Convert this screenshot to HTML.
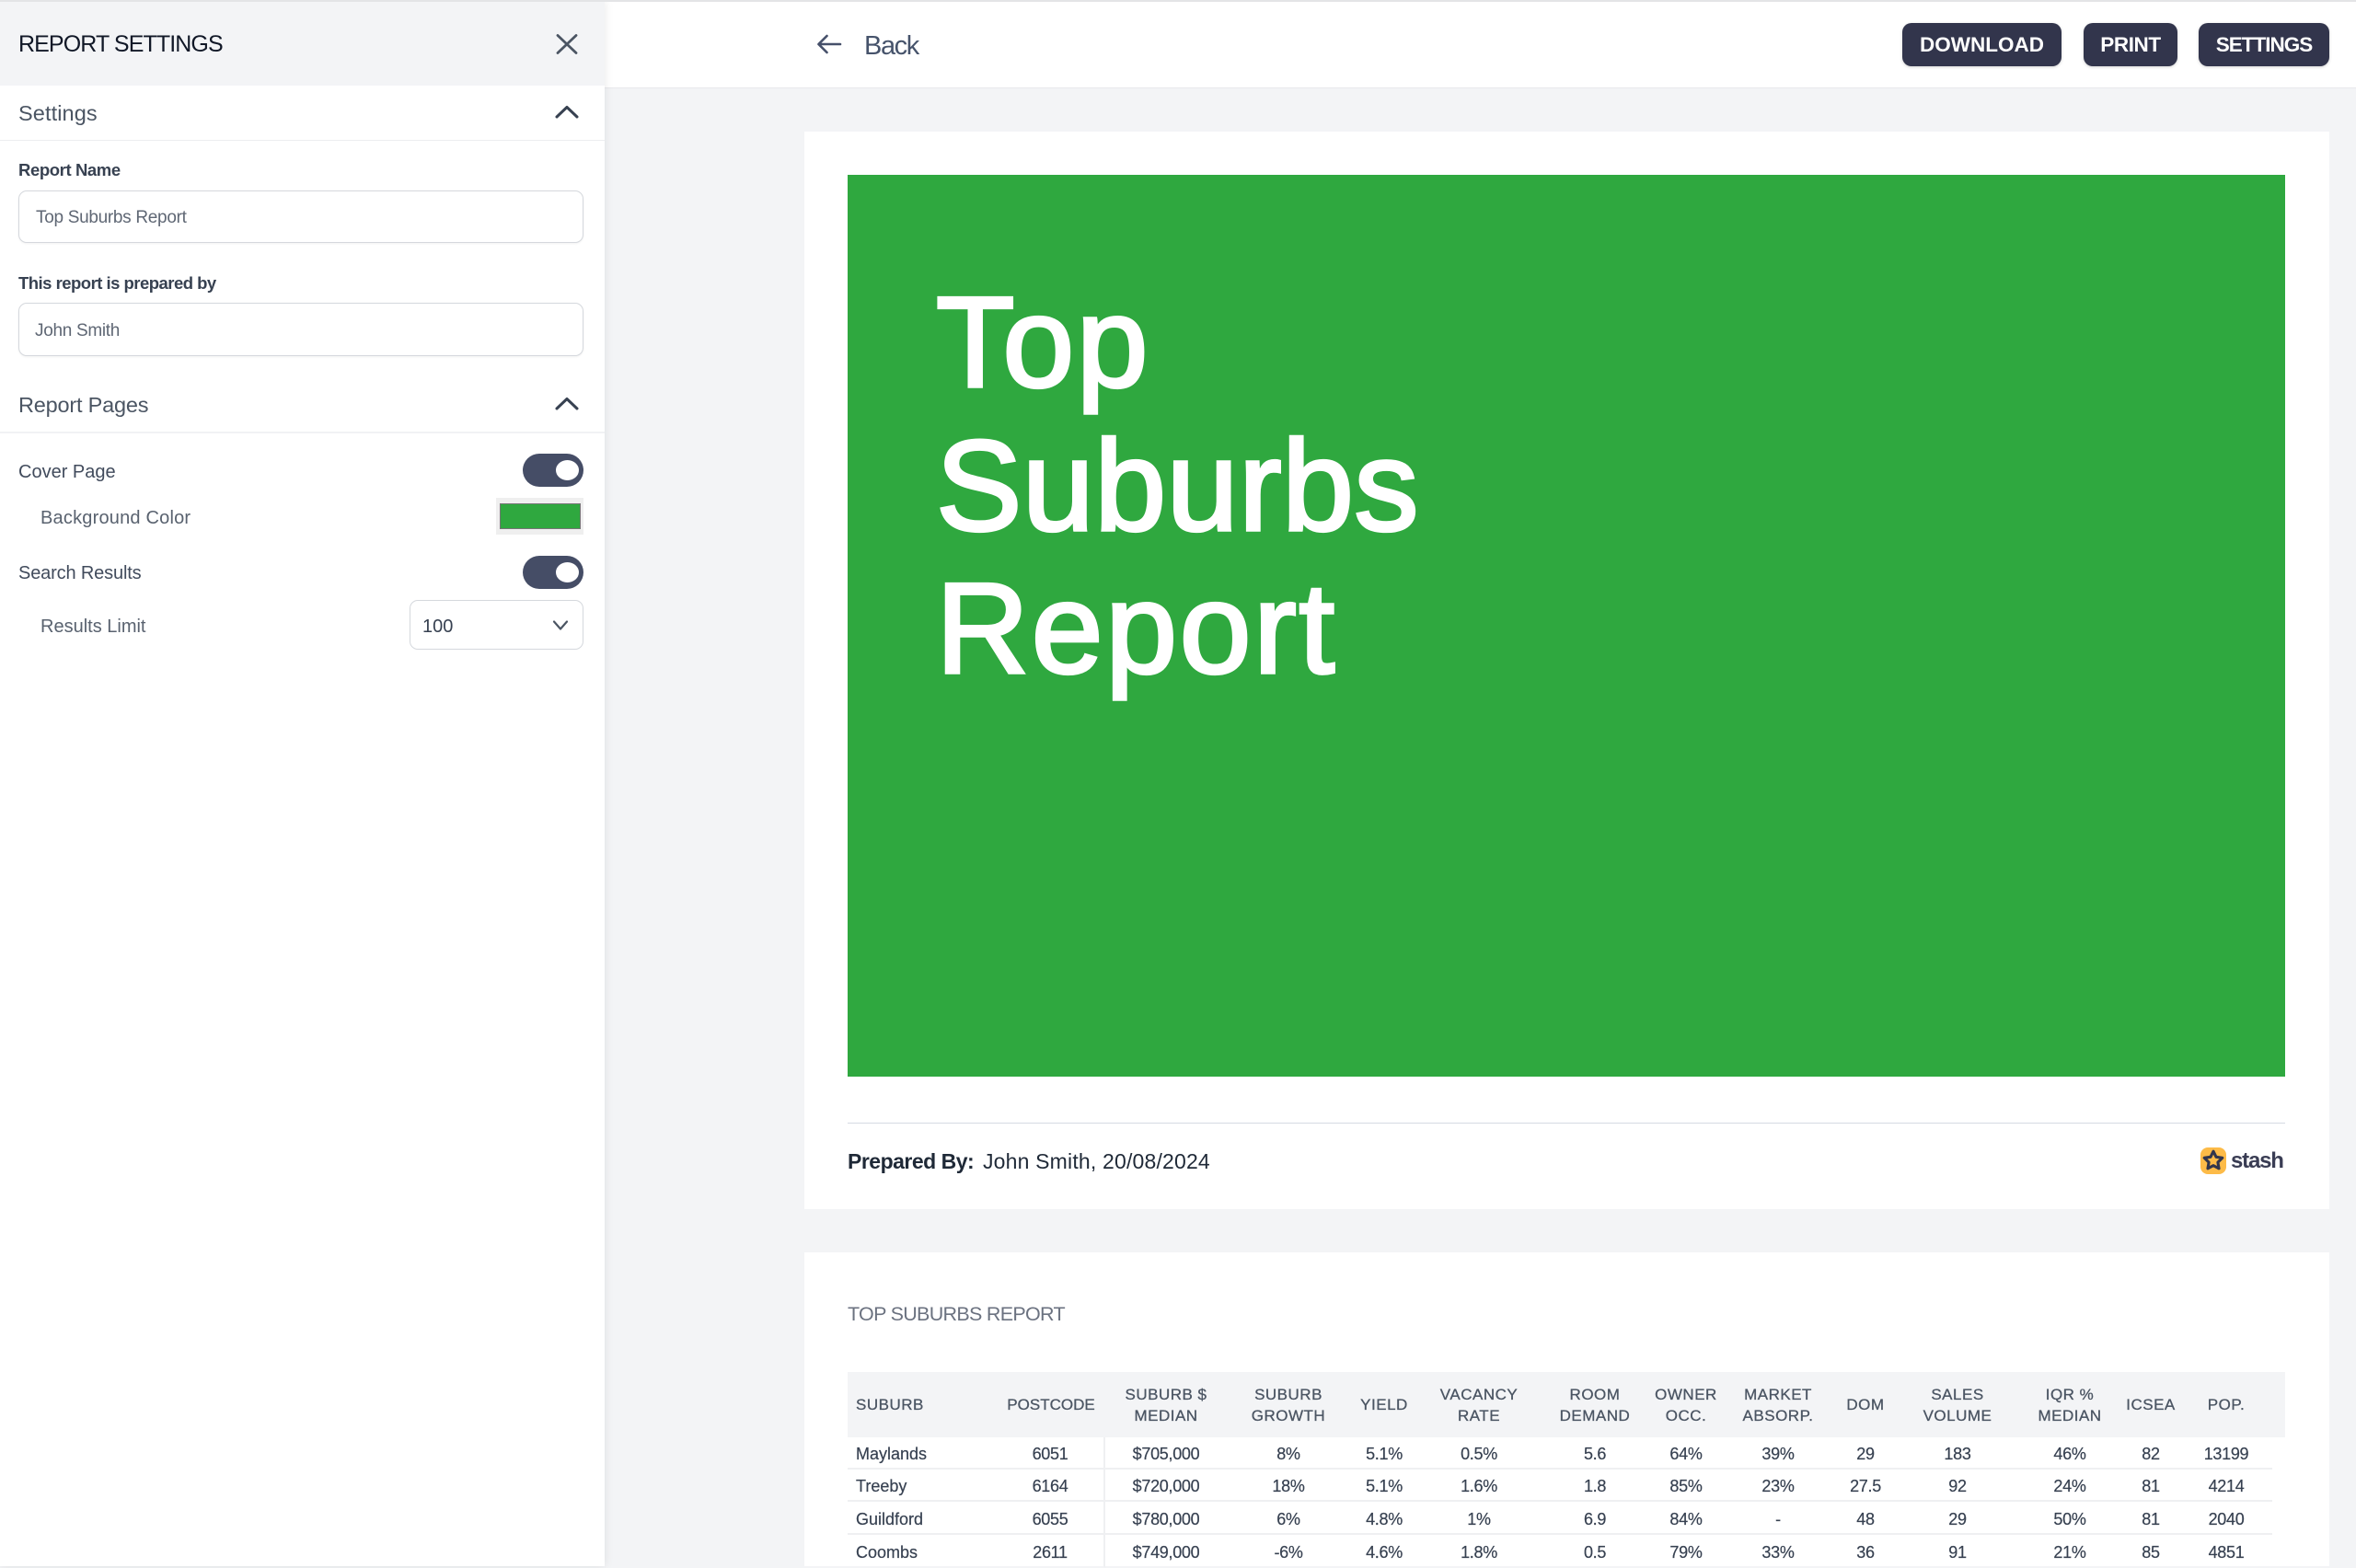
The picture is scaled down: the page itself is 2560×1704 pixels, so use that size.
<!DOCTYPE html>
<html lang="en">
<head>
<meta charset="utf-8">
<title>Report Settings</title>
<style>
*{box-sizing:border-box;margin:0;padding:0}
html,body{width:2560px;height:1702px;overflow:hidden;background:#f3f4f6;font-family:"Liberation Sans",Arial,sans-serif}
.t{position:absolute;white-space:nowrap;line-height:30px;height:30px}
.abs{position:absolute}
#strip{left:0;top:0;width:2560px;height:2px;background:#e3e4e6;z-index:5}
#topbar{left:0;top:0;width:2560px;height:96px;background:#fff;border-bottom:1px solid #e8e9ec}
.btn{position:absolute;top:25px;height:47px;line-height:47px;background:#32354c;color:#fff;border-radius:10px;text-align:center;font-size:22.5px;font-weight:bold;box-shadow:0 1px 3px rgba(0,0,0,.18);white-space:nowrap}
aside{position:absolute;left:0;top:0;width:657px;height:1702px;background:#fff;box-shadow:0 0 10px rgba(0,0,0,.09);z-index:3}
#shead{left:0;top:0;width:657px;height:93px;background:#f3f4f6}
.rule{position:absolute;left:0;width:657px;background:#eceef0}
.input{position:absolute;left:20px;width:614px;background:#fff;border:1px solid #d5d8dd;border-radius:9px;box-shadow:0 1px 2px rgba(0,0,0,.06)}
.toggle{position:absolute;left:568px;width:66px;height:36px;border-radius:18px;background:#454d66}
.toggle i{position:absolute;left:36px;top:7px;width:25px;height:22px;border-radius:50%;background:#fff}
.lbl{font-size:18.5px;font-weight:bold;color:#374151}
.val{font-size:19px;color:#5f6774;letter-spacing:-.3px}
.row{font-size:20px;color:#4b5563}
.card{position:absolute;left:874px;width:1657px;background:#fff}
table{position:absolute;left:921px;top:1491px;width:1562px;border-collapse:separate;border-spacing:0;table-layout:fixed}
th{height:71px;background:#f3f4f6;font-size:17px;font-weight:normal;color:#4b5563;line-height:23px;letter-spacing:.5px;text-align:center;vertical-align:middle;padding-top:0;-webkit-text-stroke:.3px #4b5563;position:relative}
th:first-child,td:first-child{text-align:left;padding-left:9px}
td{font-size:18px;color:#374151;text-align:center;vertical-align:middle;letter-spacing:-.3px;padding-top:3px;border-bottom:2px solid #eff0f2;white-space:nowrap;line-height:20px;-webkit-text-stroke:.2px #374151}
td:first-child{letter-spacing:0}
td:nth-child(15),tr:last-child td{border-bottom-color:transparent}
td:nth-child(2){border-right:2px solid #eff0f2}
th:nth-child(2)::after{content:"";position:absolute;right:-1px;top:12px;height:47px;width:1px;background:#dfe1e5}
</style>
</head>
<body>

<header class="abs" id="topbar"></header>
<div class="abs" id="strip"></div>

<svg class="abs" style="left:886px;top:36px" width="30" height="24" viewBox="0 0 30 24" fill="none" stroke="#46506a" stroke-width="2.6" stroke-linecap="round" stroke-linejoin="round"><path d="M27 12H3.5M12.5 3L3.5 12l9 9"/></svg>
<div class="t" style="left:939px;top:35px;font-size:29px;letter-spacing:-1.4px;color:#46536b">Back</div>

<div class="btn" style="left:2067px;width:173px">DOWNLOAD</div>
<div class="btn" style="left:2264px;width:102px;letter-spacing:-.4px">PRINT</div>
<div class="btn" style="left:2389px;width:142px;letter-spacing:-1px">SETTINGS</div>

<aside>
  <div class="abs" id="shead"></div>
  <div class="t" style="left:20px;top:33px;font-size:25px;letter-spacing:-.9px;color:#111827">REPORT SETTINGS</div>
  <svg class="abs" style="left:602px;top:34px" width="28" height="28" viewBox="0 0 28 28" fill="none" stroke="#4b5563" stroke-width="2.8" stroke-linecap="round"><path d="M4 4.5L24 23.5M24 4.5L4 23.5"/></svg>

  <div class="t" style="left:20px;top:107.5px;font-size:23.5px;letter-spacing:.1px;color:#4b5563">Settings</div>
  <svg class="abs" style="left:602px;top:112px" width="28" height="18" viewBox="0 0 28 18" fill="none" stroke="#374151" stroke-width="3" stroke-linecap="round" stroke-linejoin="round"><path d="M3 15L14 4.5L25 15"/></svg>
  <div class="rule" style="top:152px;height:1px"></div>

  <div class="t lbl" style="left:20px;top:170px;letter-spacing:-.4px">Report Name</div>
  <div class="input" style="top:207px;height:57px"></div>
  <div class="t val" style="left:39px;top:222px">Top Suburbs Report</div>

  <div class="t lbl" style="left:20px;top:293px;letter-spacing:-.52px">This report is prepared by</div>
  <div class="input" style="top:329px;height:58px"></div>
  <div class="t val" style="left:38px;top:345px">John Smith</div>

  <div class="t" style="left:20px;top:425px;font-size:23.5px;letter-spacing:-.2px;color:#4b5563">Report Pages</div>
  <svg class="abs" style="left:602px;top:429px" width="28" height="18" viewBox="0 0 28 18" fill="none" stroke="#374151" stroke-width="3" stroke-linecap="round" stroke-linejoin="round"><path d="M3 15L14 4.5L25 15"/></svg>
  <div class="rule" style="top:469px;height:2px;background:#f1f2f4"></div>

  <div class="t row" style="left:20px;top:498px;color:#414b5c">Cover Page</div>
  <div class="toggle" style="top:493px"><i></i></div>

  <div class="t row" style="left:44px;top:548px;letter-spacing:.2px;color:#59626f">Background Color</div>
  <div class="abs" style="left:539px;top:541px;width:95px;height:40px;background:#efefef"></div>
  <div class="abs" style="left:543px;top:547px;width:88px;height:28px;background:#2fa83f;border:1px solid #767676"></div>

  <div class="t row" style="left:20px;top:608px;letter-spacing:-.15px;color:#414b5c">Search Results</div>
  <div class="toggle" style="top:604px"><i></i></div>

  <div class="t row" style="left:44px;top:666px;color:#59626f">Results Limit</div>
  <div class="abs" style="left:445px;top:652px;width:189px;height:54px;border:1px solid #d5d8dd;border-radius:9px;background:#fff"></div>
  <div class="t" style="left:459px;top:666px;font-size:20px;color:#374151">100</div>
  <svg class="abs" style="left:599px;top:672px" width="20" height="15" viewBox="0 0 20 15" fill="none" stroke="#4b5563" stroke-width="2.2" stroke-linecap="round" stroke-linejoin="round"><path d="M3 3.5L10 11.5L17 3.5"/></svg>
</aside>

<main>
  <section class="card" style="top:143px;height:1171px"></section>
  <div class="abs" style="left:921px;top:190px;width:1562px;height:980px;background:#2fa83f"></div>
  <h1 class="abs" style="left:1017px;top:294px;font-size:140px;font-weight:normal;line-height:155.5px;color:#fff;-webkit-text-stroke:3.5px #fff;white-space:nowrap">
    <span style="display:block;letter-spacing:2.4px">Top</span>
    <span style="display:block;letter-spacing:.5px">Suburbs</span>
    <span style="display:block;letter-spacing:2.6px">Report</span>
  </h1>
  <div class="abs" style="left:921px;top:1220px;width:1562px;height:1px;background:#d6dae3"></div>
  <div class="t" style="left:921px;top:1246.5px;font-size:23px;font-weight:bold;letter-spacing:-.5px;color:#1f2937">Prepared By:</div>
  <div class="t" style="left:1068px;top:1246.5px;font-size:23px;letter-spacing:.18px;color:#1f2937">John Smith, 20/08/2024</div>

  <svg class="abs" style="left:2391px;top:1247px" width="28" height="29" viewBox="0 0 28 29"><rect width="28" height="29" rx="8" fill="#fdbb48"/><path transform="translate(14 14.5) scale(.86) translate(-14 -15)" d="M14 3L17.5 10.1L25.4 11.3L19.7 16.85L21.05 24.7L14 21L6.95 24.7L8.3 16.85L2.6 11.3L10.5 10.1Z" fill="#fdbb48" stroke="#32354c" stroke-width="3.6" stroke-linejoin="round"/></svg>
  <div class="t" style="left:2424px;top:1247px;font-size:24px;font-weight:bold;letter-spacing:-1.2px;color:#3a3d54">stash</div>

  <section class="card" style="top:1361px;height:341px"></section>
  <div class="t" style="left:921px;top:1412.5px;font-size:21.5px;letter-spacing:-.7px;color:#6b7280">TOP SUBURBS REPORT</div>

  <table>
    <colgroup>
      <col style="width:162px"><col style="width:118px"><col style="width:132px"><col style="width:134px"><col style="width:74px"><col style="width:132px"><col style="width:120px"><col style="width:78px"><col style="width:122px"><col style="width:68px"><col style="width:132px"><col style="width:112px"><col style="width:64px"><col style="width:100px"><col style="width:14px">
    </colgroup>
    <thead>
      <tr><th>SUBURB</th><th style="letter-spacing:0">POSTCODE</th><th>SUBURB $<br>MEDIAN</th><th>SUBURB<br>GROWTH</th><th>YIELD</th><th>VACANCY<br>RATE</th><th>ROOM<br>DEMAND</th><th>OWNER<br>OCC.</th><th>MARKET<br>ABSORP.</th><th>DOM</th><th>SALES<br>VOLUME</th><th>IQR %<br>MEDIAN</th><th>ICSEA</th><th>POP.</th><th></th></tr>
    </thead>
    <tbody>
      <tr style="height:35px"><td>Maylands</td><td>6051</td><td>$705,000</td><td>8%</td><td>5.1%</td><td>0.5%</td><td>5.6</td><td>64%</td><td>39%</td><td>29</td><td>183</td><td>46%</td><td>82</td><td>13199</td><td></td></tr>
      <tr style="height:35px"><td>Treeby</td><td>6164</td><td>$720,000</td><td>18%</td><td>5.1%</td><td>1.6%</td><td>1.8</td><td>85%</td><td>23%</td><td>27.5</td><td>92</td><td>24%</td><td>81</td><td>4214</td><td></td></tr>
      <tr style="height:36px"><td>Guildford</td><td>6055</td><td>$780,000</td><td>6%</td><td>4.8%</td><td>1%</td><td>6.9</td><td>84%</td><td>-</td><td>48</td><td>29</td><td>50%</td><td>81</td><td>2040</td><td></td></tr>
      <tr style="height:36px"><td>Coombs</td><td>2611</td><td>$749,000</td><td>-6%</td><td>4.6%</td><td>1.8%</td><td>0.5</td><td>79%</td><td>33%</td><td>36</td><td>91</td><td>21%</td><td>85</td><td>4851</td><td></td></tr>
    </tbody>
  </table>
</main>

</body>
</html>
